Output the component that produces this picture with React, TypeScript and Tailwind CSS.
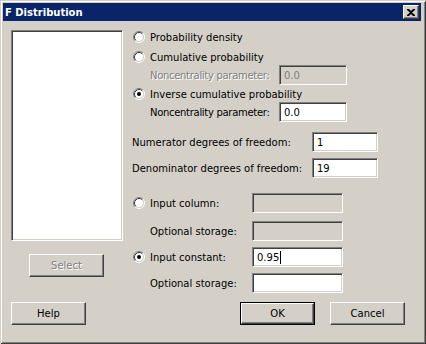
import type { ReactNode } from 'react'

function Radio({ checked }: { checked?: boolean }) {
  return (
    <svg width="12" height="12" viewBox="0 0 12 12" className="shrink-0">
      <circle cx="6" cy="6" r="4.5" fill="#fff" />
      <path d="M2.11 9.89A5.5 5.5 0 0 1 9.89 2.11" fill="none" stroke="#808080" />
      <path d="M9.89 2.11A5.5 5.5 0 0 1 2.11 9.89" fill="none" stroke="#fff" />
      <path d="M2.82 9.18A4.5 4.5 0 0 1 9.18 2.82" fill="none" stroke="#404040" />
      <path d="M9.18 2.82A4.5 4.5 0 0 1 2.82 9.18" fill="none" stroke="#d4d0c8" />
      {checked && <circle cx="6" cy="6" r="2" fill="#000" />}
    </svg>
  )
}

function Edit({ className, value, disabled, caret }: { className: string; value?: string; disabled?: boolean; caret?: boolean }) {
  return (
    <div
      className={`h-[20px] shrink-0 flex items-center pl-[4px] border border-t-[#808080] border-l-[#808080] border-b-white border-r-white shadow-[inset_1px_1px_#404040,inset_-1px_-1px_#d4d0c8] ${
        disabled ? 'bg-[#d4d0c8] text-[#808080]' : 'bg-white text-black'
      } ${className}`}
    >
      {value}
      {caret && <span className="inline-block w-px h-[13px] bg-black ml-px" />}
    </div>
  )
}

function Btn({ children, className, def, disabled }: { children: ReactNode; className: string; def?: boolean; disabled?: boolean }) {
  const face = (
    <div
      className={`w-full h-full flex items-center justify-center border border-t-white border-l-white border-b-[#404040] border-r-[#404040] shadow-[inset_-1px_-1px_#808080] ${
        disabled ? 'text-[#808080] [text-shadow:1px_1px_#fff]' : 'text-black'
      }`}
    >
      {children}
    </div>
  )
  if (def) return <div className={`h-[23px] border border-black ${className}`}>{face}</div>
  return <div className={`h-[23px] ${className}`}>{face}</div>
}

function OptionRow({ label, checked, className }: { label: string; checked?: boolean; className: string }) {
  return (
    <div className={`flex items-center h-[14px] ${className}`}>
      <span className="ml-px">
        <Radio checked={checked} />
      </span>
      <span className="ml-[5px]">{label}</span>
    </div>
  )
}

export default function App() {
  return (
    <div className="w-[426px] h-[344px] bg-[#d4d0c8] flex flex-col pt-[3px] pl-[3px] pr-[5px] pb-[3px] font-['DejaVu_Sans',sans-serif] text-[10px] whitespace-nowrap text-black shadow-[inset_1px_1px_#d4d0c8,inset_-1px_-1px_#404040,inset_2px_2px_#fff,inset_-2px_-2px_#808080]">
      {/* title bar */}
      <div className="h-[18px] bg-[#0a246a] flex items-center justify-between pl-[2px] pr-[2px]">
        <span className="text-white font-bold text-[10px]">F Distribution</span>
        <div className="w-[16px] h-[14px] bg-[#d4d0c8] flex items-center justify-center border border-t-white border-l-white border-b-[#404040] border-r-[#404040] shadow-[inset_-1px_-1px_#808080]">
          <svg width="8" height="7" viewBox="0 0 8 7">
            <path d="M0 0h2l2 2 2-2h2v1L5 3.5 8 6v1H6L4 5 2 7H0V6l3-2.5L0 1z" fill="#000" />
          </svg>
        </div>
      </div>

      <div className="flex-1 flex flex-col pl-[8px] pt-[9px]">
        <div className="flex">
          {/* left column */}
          <div className="w-[112px] flex flex-col shrink-0">
            <div className="h-[211px] w-[112px] bg-white border border-t-[#808080] border-l-[#808080] border-b-white border-r-white shadow-[inset_1px_1px_#404040,inset_-1px_-1px_#d4d0c8]" />
            <Btn className="w-[75px] mt-[13px] ml-[18px]" disabled>
              Select
            </Btn>
          </div>

          {/* right column */}
          <div className="ml-[9px] flex flex-col">
            <OptionRow label="Probability density" className="" />
            <OptionRow label="Cumulative probability" className="mt-[6px]" />
            <div className="flex items-center h-[20px] mt-[1px] pl-[18px]">
              <span className="w-[129px] tracking-[-0.3px] text-[#808080] [text-shadow:1px_1px_#fff]">Noncentrality parameter:</span>
              <Edit className="w-[68px]" value="0.0" disabled />
            </div>
            <OptionRow label="Inverse cumulative probability" checked className="mt-[2px]" />
            <div className="flex items-center h-[20px] mt-[1px] pl-[18px]">
              <span className="w-[129px] tracking-[-0.3px]">Noncentrality parameter:</span>
              <Edit className="w-[68px]" value="0.0" />
            </div>

            <div className="flex items-center h-[20px] mt-[10px]">
              <span className="w-[180px]">Numerator degrees of freedom:</span>
              <Edit className="w-[66px]" value="1" />
            </div>
            <div className="flex items-center h-[20px] mt-[6px]">
              <span className="w-[180px]">Denominator degrees of freedom:</span>
              <Edit className="w-[66px]" value="19" />
            </div>

            <div className="flex items-center h-[20px] mt-[15px]">
              <span className="ml-px">
                <Radio />
              </span>
              <span className="ml-[5px] w-[102px]">Input column:</span>
              <Edit className="w-[91px]" disabled />
            </div>
            <div className="flex items-center h-[20px] mt-[8px] pl-[18px]">
              <span className="w-[102px]">Optional storage:</span>
              <Edit className="w-[91px]" disabled />
            </div>
            <div className="flex items-center h-[20px] mt-[6px]">
              <span className="ml-px">
                <Radio checked />
              </span>
              <span className="ml-[5px] w-[102px]">Input constant:</span>
              <Edit className="w-[91px]" value="0.95" caret />
            </div>
            <div className="flex items-center h-[20px] mt-[6px] pl-[18px]">
              <span className="w-[102px]">Optional storage:</span>
              <Edit className="w-[91px]" />
            </div>
          </div>
        </div>

        {/* buttons */}
        <div className="flex mt-[9px]">
          <Btn className="w-[75px]">Help</Btn>
          <Btn className="w-[75px] ml-[154px]" def>
            OK
          </Btn>
          <Btn className="w-[75px] ml-[15px]">Cancel</Btn>
        </div>
      </div>
    </div>
  )
}
